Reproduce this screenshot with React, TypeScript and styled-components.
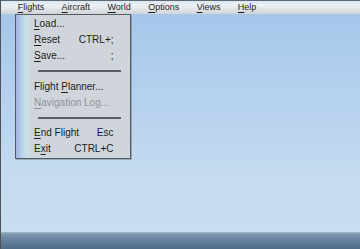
import React from 'react';
import styled, { createGlobalStyle } from 'styled-components';

const GlobalStyle = createGlobalStyle`
  html, body {
    margin: 0;
    padding: 0;
    background: #c6dcf0;
  }
`;

const Screen = styled.div`
  width: 360px;
  height: 249px;
  display: flex;
  flex-direction: column;
  border-left: 1px solid #4c535b;
  box-sizing: border-box;
  font-family: 'Liberation Sans', Arial, sans-serif;
  overflow: hidden;
`;

const MenuBar = styled.div`
  height: 14px;
  box-sizing: border-box;
  border-top: 1px solid #5d6873;
  display: flex;
  align-items: center;
  padding-left: 8px;
  background: linear-gradient(180deg, #d9e6ee 0%, #eef1f3 35%, #dde1e5 70%, #cfd4d9 100%);
  font-size: 9px;
  color: #1e1e1e;
`;

const BarItem = styled.span`
  padding: 0 8.7px;
  line-height: 13px;
`;

const Key = styled.span`
  text-decoration: underline;
  text-underline-offset: 1.5px;
`;

const Desktop = styled.div`
  flex: 1;
  position: relative;
  background: linear-gradient(180deg, #a6c6ea 0%, #b4d0ee 35%, #c3daf0 70%, #c7ddf1 100%);
`;

const Dropdown = styled.div`
  position: absolute;
  left: 14px;
  top: 0;
  width: 116px;
  box-sizing: border-box;
  display: flex;
  border: 1px solid #525a63;
  background: #d0d5db;
  box-shadow: 1px 1px 0 rgba(70, 80, 90, 0.35);
`;

const Strip = styled.div`
  width: 15px;
  flex-shrink: 0;
  background: linear-gradient(90deg, #a2b3e0 0%, #b7d3ea 40%, #c4e2e8 65%, #d0d8e0 100%);
`;

const Items = styled.div`
  flex: 1;
  padding: 1px 0;
  font-size: 10px;
`;

const Row = styled.div<{ $disabled?: boolean }>`
  height: 16px;
  line-height: 16px;
  display: flex;
  justify-content: space-between;
  padding: 0 16.5px 0 3px;
  color: ${(p) => (p.$disabled ? '#8d939a' : '#1c1c1c')};
  white-space: nowrap;
`;

const SeparatorRow = styled.div`
  height: 14.5px;
  display: flex;
  align-items: center;
  padding: 0 9.5px 0 6.5px;
`;

const Rule = styled.div`
  flex: 1;
  height: 2px;
  background: #5a6068;
`;

const StatusBar = styled.div`
  height: 17px;
  flex-shrink: 0;
  background: linear-gradient(180deg, #a4b7c8 0%, #7f98ae 12%, #6883a0 45%, #4f6b87 100%);
`;

type Entry =
  | { kind: 'item'; pre: string; key: string; post: string; shortcut?: string; disabled?: boolean }
  | { kind: 'sep' };

const bar = [
  ['F', 'lights'],
  ['A', 'ircraft'],
  ['W', 'orld'],
  ['O', 'ptions'],
  ['V', 'iews'],
  ['H', 'elp'],
];

const entries: Entry[] = [
  { kind: 'item', pre: '', key: 'L', post: 'oad...' },
  { kind: 'item', pre: '', key: 'R', post: 'eset', shortcut: 'CTRL+;' },
  { kind: 'item', pre: '', key: 'S', post: 'ave...', shortcut: ';' },
  { kind: 'sep' },
  { kind: 'item', pre: 'Flight ', key: 'P', post: 'lanner...' },
  { kind: 'item', pre: '', key: 'N', post: 'avigation Log...', disabled: true },
  { kind: 'sep' },
  { kind: 'item', pre: '', key: 'E', post: 'nd Flight', shortcut: 'Esc' },
  { kind: 'item', pre: 'E', key: 'x', post: 'it', shortcut: 'CTRL+C' },
];

export default function App() {
  return (
    <>
      <GlobalStyle />
      <Screen>
        <MenuBar>
          {bar.map(([k, rest]) => (
            <BarItem key={k + rest}>
              <Key>{k}</Key>
              {rest}
            </BarItem>
          ))}
        </MenuBar>
        <Desktop>
          <Dropdown>
            <Strip />
            <Items>
              {entries.map((e, i) =>
                e.kind === 'sep' ? (
                  <SeparatorRow key={i}>
                    <Rule />
                  </SeparatorRow>
                ) : (
                  <Row key={i} $disabled={e.disabled}>
                    <span>
                      {e.pre}
                      <Key>{e.key}</Key>
                      {e.post}
                    </span>
                    {e.shortcut && <span>{e.shortcut}</span>}
                  </Row>
                )
              )}
            </Items>
          </Dropdown>
        </Desktop>
        <StatusBar />
      </Screen>
    </>
  );
}
